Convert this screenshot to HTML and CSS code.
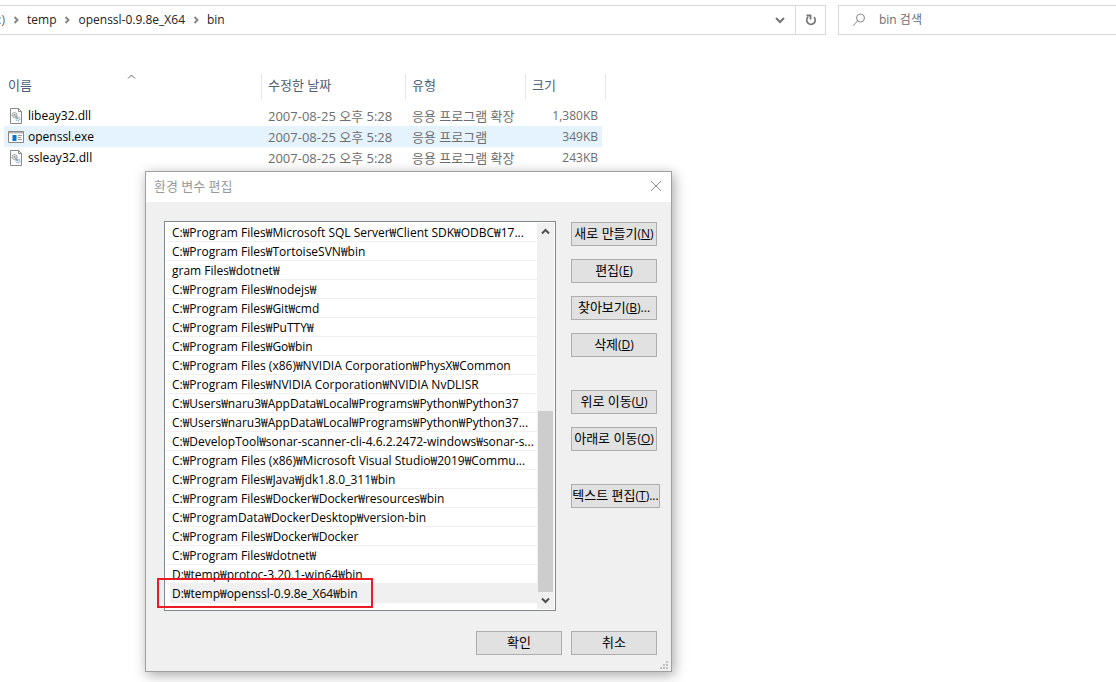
FILE: index.html
```html
<!DOCTYPE html>
<html lang="ko">
<head>
    <meta charset="UTF-8">
    <meta name="viewport" content="width=device-width, initial-scale=1.0">
    <title>bin</title>
    <link rel="stylesheet" href="styles.css">
</head>
<body>

    <div class="toolbar">
        <div class="address">
            <nav class="crumbs">
                <span class="drive">:)</span>
                <svg class="sep" viewBox="0 0 5 8"><path d="M1 1l3 3-3 3"/></svg>
                <a href="#">temp</a>
                <svg class="sep" viewBox="0 0 5 8"><path d="M1 1l3 3-3 3"/></svg>
                <a href="#">openssl-0.9.8e_X64</a>
                <svg class="sep" viewBox="0 0 5 8"><path d="M1 1l3 3-3 3"/></svg>
                <a href="#">bin</a>
            </nav>
            <button class="tool" aria-label="이전 위치">
                <svg width="10" height="8" viewBox="0 0 10 8"><path d="M1 2l4 4 4-4" fill="none" stroke="#767676" stroke-width="2"/></svg>
            </button>
            <button class="tool refresh" aria-label="새로 고침">
                <svg width="12" height="12" viewBox="0 0 12 12"><path d="M9 3.200A4.200 4.200 0 1 1 3 3.200M1.500 1.500h4v4" fill="none" stroke="#767676" stroke-width="1.800"/></svg>
            </button>
        </div>
        <label class="search">
            <svg width="14" height="14" viewBox="0 0 14 14"><circle cx="8.500" cy="5" r="4" fill="none" stroke="#888"/><path d="M5.700 7.800L1 12.800" stroke="#888" fill="none"/></svg>
            <input type="text" placeholder="bin 검색" aria-label="bin 검색">
        </label>
    </div>

    <table class="files">
        <colgroup>
            <col class="col-name"><col class="col-date"><col class="col-type"><col class="col-size"><col class="col-end">
        </colgroup>
        <thead>
            <tr>
                <th>이름<svg class="sort" width="9" height="5" viewBox="0 0 9 5"><path d="M1 4.500l3.500-3.500 3.500 3.500" fill="none" stroke="#666"/></svg></th>
                <th>수정한 날짜</th>
                <th>유형</th>
                <th colspan="2">크기</th>
            </tr>
        </thead>
        <tbody>
            <tr>
                <td class="name"><svg width="16" height="16" viewBox="0 0 16 16"><use href="#dll"/></svg>libeay32.dll</td>
                <td>2007-08-25 오후 5:28</td>
                <td>응용 프로그램 확장</td>
                <td class="size">1,380KB</td>
                <td></td>
            </tr>
            <tr class="hover">
                <td class="name"><svg width="16" height="16" viewBox="0 0 16 16"><path d="M.5 2.500h15v11H.5z" fill="#fff" stroke="#868686"/><path d="M1 3h14v1.500H1z" fill="#b5b5b5"/><path d="M4.500 6h4v6h-4z" fill="#0078d7"/><path d="M10 6.500h4M10 8.500h3M10 10.500h4" stroke="#999"/></svg>openssl.exe</td>
                <td>2007-08-25 오후 5:28</td>
                <td>응용 프로그램</td>
                <td class="size">349KB</td>
                <td></td>
            </tr>
            <tr>
                <td class="name"><svg width="16" height="16" viewBox="0 0 16 16"><use href="#dll"/></svg>ssleay32.dll</td>
                <td>2007-08-25 오후 5:28</td>
                <td>응용 프로그램 확장</td>
                <td class="size">243KB</td>
                <td></td>
            </tr>
        </tbody>
    </table>

    <svg class="defs">
        <symbol id="dll" viewBox="0 0 16 16">
            <path d="M2.500.5h8l3 3v12h-11z" fill="#fdfdfd" stroke="#8a8a8a"/>
            <path d="M10.500.5v3h3" fill="none" stroke="#8a8a8a"/>
            <circle cx="6.500" cy="7" r="2.500" fill="#e4e7e9" stroke="#7d868c" stroke-dasharray="1.500 .6"/>
            <circle cx="6.500" cy="7" r="1" fill="#8b9297"/>
            <circle cx="10" cy="11" r="2" fill="#dcebf3" stroke="#7ba3ba" stroke-dasharray="1.200 .6"/>
            <path d="M7.500 8l2.500 3" stroke="#7d868c"/>
        </symbol>
    </svg>

    <div class="dialog" role="dialog" aria-labelledby="dialog-title">
        <div class="titlebar">
            <span id="dialog-title">환경 변수 편집</span>
            <button class="close" aria-label="닫기">
                <svg width="12" height="12" viewBox="0 0 12 12"><path d="M1 1l10 10M11 1L1 11" stroke="#8c8c8c" fill="none"/></svg>
            </button>
        </div>
        <div class="content">
            <div class="listbox">
                <ul class="paths">
                    <li>C:₩Program Files₩Microsoft SQL Server₩Client SDK₩ODBC₩17...</li>
                    <li>C:₩Program Files₩TortoiseSVN₩bin</li>
                    <li>gram Files₩dotnet₩</li>
                    <li>C:₩Program Files₩nodejs₩</li>
                    <li>C:₩Program Files₩Git₩cmd</li>
                    <li>C:₩Program Files₩PuTTY₩</li>
                    <li>C:₩Program Files₩Go₩bin</li>
                    <li>C:₩Program Files (x86)₩NVIDIA Corporation₩PhysX₩Common</li>
                    <li>C:₩Program Files₩NVIDIA Corporation₩NVIDIA NvDLISR</li>
                    <li>C:₩Users₩naru3₩AppData₩Local₩Programs₩Python₩Python37</li>
                    <li>C:₩Users₩naru3₩AppData₩Local₩Programs₩Python₩Python37...</li>
                    <li>C:₩DevelopTool₩sonar-scanner-cli-4.6.2.2472-windows₩sonar-s...</li>
                    <li>C:₩Program Files (x86)₩Microsoft Visual Studio₩2019₩Commu...</li>
                    <li>C:₩Program Files₩Java₩jdk1.8.0_311₩bin</li>
                    <li>C:₩Program Files₩Docker₩Docker₩resources₩bin</li>
                    <li>C:₩ProgramData₩DockerDesktop₩version-bin</li>
                    <li>C:₩Program Files₩Docker₩Docker</li>
                    <li>C:₩Program Files₩dotnet₩</li>
                    <li>D:₩temp₩protoc-3.20.1-win64₩bin</li>
                    <li class="selected">D:₩temp₩openssl-0.9.8e_X64₩bin<span class="marker"></span></li>
                </ul>
                <div class="scrollbar">
                    <svg width="9" height="7" viewBox="0 0 9 7"><path d="M1 5.500L4.500 2 8 5.500" fill="none" stroke="#505050" stroke-width="2"/></svg>
                    <div class="thumb"></div>
                    <svg width="9" height="7" viewBox="0 0 9 7"><path d="M1 1.500L4.500 5 8 1.500" fill="none" stroke="#505050" stroke-width="2"/></svg>
                </div>
            </div>
            <div class="actions">
                <div class="group">
                    <button class="btn">새로 만들기<span>(<u>N</u>)</span></button>
                    <button class="btn">편집<span>(<u>E</u>)</span></button>
                    <button class="btn">찾아보기<span>(<u>B</u>)...</span></button>
                    <button class="btn">삭제<span>(<u>D</u>)</span></button>
                </div>
                <div class="group">
                    <button class="btn">위로 이동<span>(<u>U</u>)</span></button>
                    <button class="btn">아래로 이동<span>(<u>O</u>)</span></button>
                </div>
                <div class="group">
                    <button class="btn wide">텍스트 편집<span>(<u>T</u>)...</span></button>
                </div>
            </div>
        </div>
        <div class="footer">
            <button class="btn">확인</button>
            <button class="btn">취소</button>
        </div>
        <svg class="grip" width="8" height="8" viewBox="0 0 8 8"><path d="M6 0h2v2H6zM3 3h2v2H3zM6 3h2v2H6zM0 6h2v2H0zM3 6h2v2H3zM6 6h2v2H6z" fill="#bfbfbf"/></svg>
    </div>

</body>
</html>
```
FILE: styles.css
```css
* {
    box-sizing: border-box;
}
body {
    margin: 0;
    padding-top: 5px;
    background: #fff;
    color: #000;
    font-family: "Open Sans", "Noto Sans CJK KR", sans-serif;
    font-size: 12px;
    min-height: 100vh;
    overflow: hidden;
}
button {
    font: inherit;
    padding: 0;
    border: 0;
    background: none;
}

/* address bar */
.toolbar {
    display: grid;
    grid-template-columns: 826px 1fr;
    gap: 12px;
    height: 30px;
}
.address {
    display: flex;
    border: 1px solid #d9d9d9;
    border-left: 0;
}
.crumbs {
    flex: 1;
    display: flex;
    align-items: center;
    gap: 8px;
}
.crumbs a {
    padding-bottom: 2px;
    color: #222;
    text-decoration: none;
}
.drive {
    color: #666;
    width: 5px;
    padding-bottom: 2px;
    display: flex;
    justify-content: flex-end;
}
.sep {
    width: 6px;
    height: 8px;
    fill: none;
    stroke: #888;
    stroke-width: 2;
}
.tool {
    width: 30px;
    display: flex;
    align-items: center;
    justify-content: center;
}
.refresh {
    border-left: 1px solid #d9d9d9;
}
.search {
    display: flex;
    align-items: center;
    gap: 13px;
    padding-left: 13px;
    border: 1px solid #d9d9d9;
    border-right: 0;
}
.search input {
    flex: 1;
    min-width: 0;
    padding: 0 0 2px;
    border: 0;
    outline: 0;
    font: inherit;
}
.search input::placeholder {
    color: #6d6d6d;
}

/* file list */
.files {
    table-layout: fixed;
    width: 602px;
    margin: 39px 0 0 4px;
    border-collapse: separate;
    border-spacing: 0;
    color: #6d6d6d;
}
.col-name { width: 258px; }
.col-date { width: 144px; }
.col-type { width: 120px; }
.col-size { width: 76px; }
.col-end { width: 4px; }
.files th {
    position: relative;
    height: 26px;
    padding: 0 0 4px 6px;
    border-right: 1px solid #e5e5e5;
    color: #4c607a;
    font-size: 13px;
    font-weight: normal;
    line-height: 20px;
    text-align: left;
}
.files th:first-child,
.files td:first-child {
    padding-left: 4px;
}
.files tbody::before {
    content: "";
    display: block;
    height: 5px;
}
.files td {
    height: 21px;
    padding: 0 0 0 6px;
    font-size: 13px;
    line-height: 20px;
    white-space: nowrap;
}
.files td:last-child {
    padding: 0;
}
.files .name {
    color: #000;
    font-size: 12px;
}
.name svg {
    margin-right: 4px;
    vertical-align: middle;
}
.files .size {
    padding: 0 4px 0 0;
    font-size: 12px;
    text-align: right;
}
.hover td:not(:last-child) {
    background: #e5f3ff;
}
.sort {
    position: absolute;
    top: 0;
    left: 123px;
}
.defs {
    position: absolute;
    width: 0;
    height: 0;
}

/* dialog */
.dialog {
    position: absolute;
    top: 171px;
    left: 145px;
    width: 527px;
    border: 1px solid #a0a0a0;
    background: #f0f0f0;
    box-shadow: 2px 3px 12px rgba(0, 0, 0, 0.35);
}
.titlebar {
    display: flex;
    align-items: center;
    justify-content: space-between;
    height: 30px;
    padding: 0 9px 2px 8px;
    background: #fff;
    color: #999;
    font-size: 13px;
}
.titlebar span {
    padding-bottom: 2px;
}
.close {
    display: flex;
}
.content {
    display: flex;
    gap: 15px;
    padding: 19px 11px 0 18px;
}
.listbox {
    flex: 1;
    display: flex;
    padding: 1px;
    border: 1px solid #828790;
    background: #fff;
}
.paths {
    flex: 1;
    margin: 0;
    padding: 0 0 6px;
    list-style: none;
}
.paths li {
    height: 19px;
    padding-left: 6px;
    border-bottom: 1px solid #f0f0f0;
    line-height: 20px;
    white-space: nowrap;
}
.paths .selected {
    position: relative;
    margin-left: 4px;
    padding-left: 2px;
    background: #f0f0f0;
}
.marker {
    position: absolute;
    top: -6px;
    left: -13px;
    width: 216px;
    height: 30px;
    border: 2px solid #ed1c24;
}
.scrollbar {
    display: flex;
    flex-direction: column;
    align-items: center;
    width: 17px;
    padding: 5px 1px;
    background: #f0f0f0;
}
.thumb {
    width: 15px;
    height: 181px;
    margin: auto 0 5px;
    background: #cdcdcd;
}
.actions {
    display: flex;
    flex-direction: column;
    gap: 33px;
    width: 89px;
    padding-top: 1px;
}
.group {
    display: flex;
    flex-direction: column;
    gap: 13px;
}
.btn {
    width: 86px;
    height: 24px;
    padding-bottom: 2px;
    border: 1px solid #adadad;
    background: #e1e1e1;
    color: #000;
    font-size: 13px;
    line-height: 20px;
    white-space: nowrap;
}
.btn span {
    font-size: 12px;
}
.wide {
    width: 89px;
}
.footer {
    display: flex;
    justify-content: flex-end;
    gap: 9px;
    padding: 20px 14px 16px;
}
.grip {
    position: absolute;
    right: 3px;
    bottom: 2px;
}
```
